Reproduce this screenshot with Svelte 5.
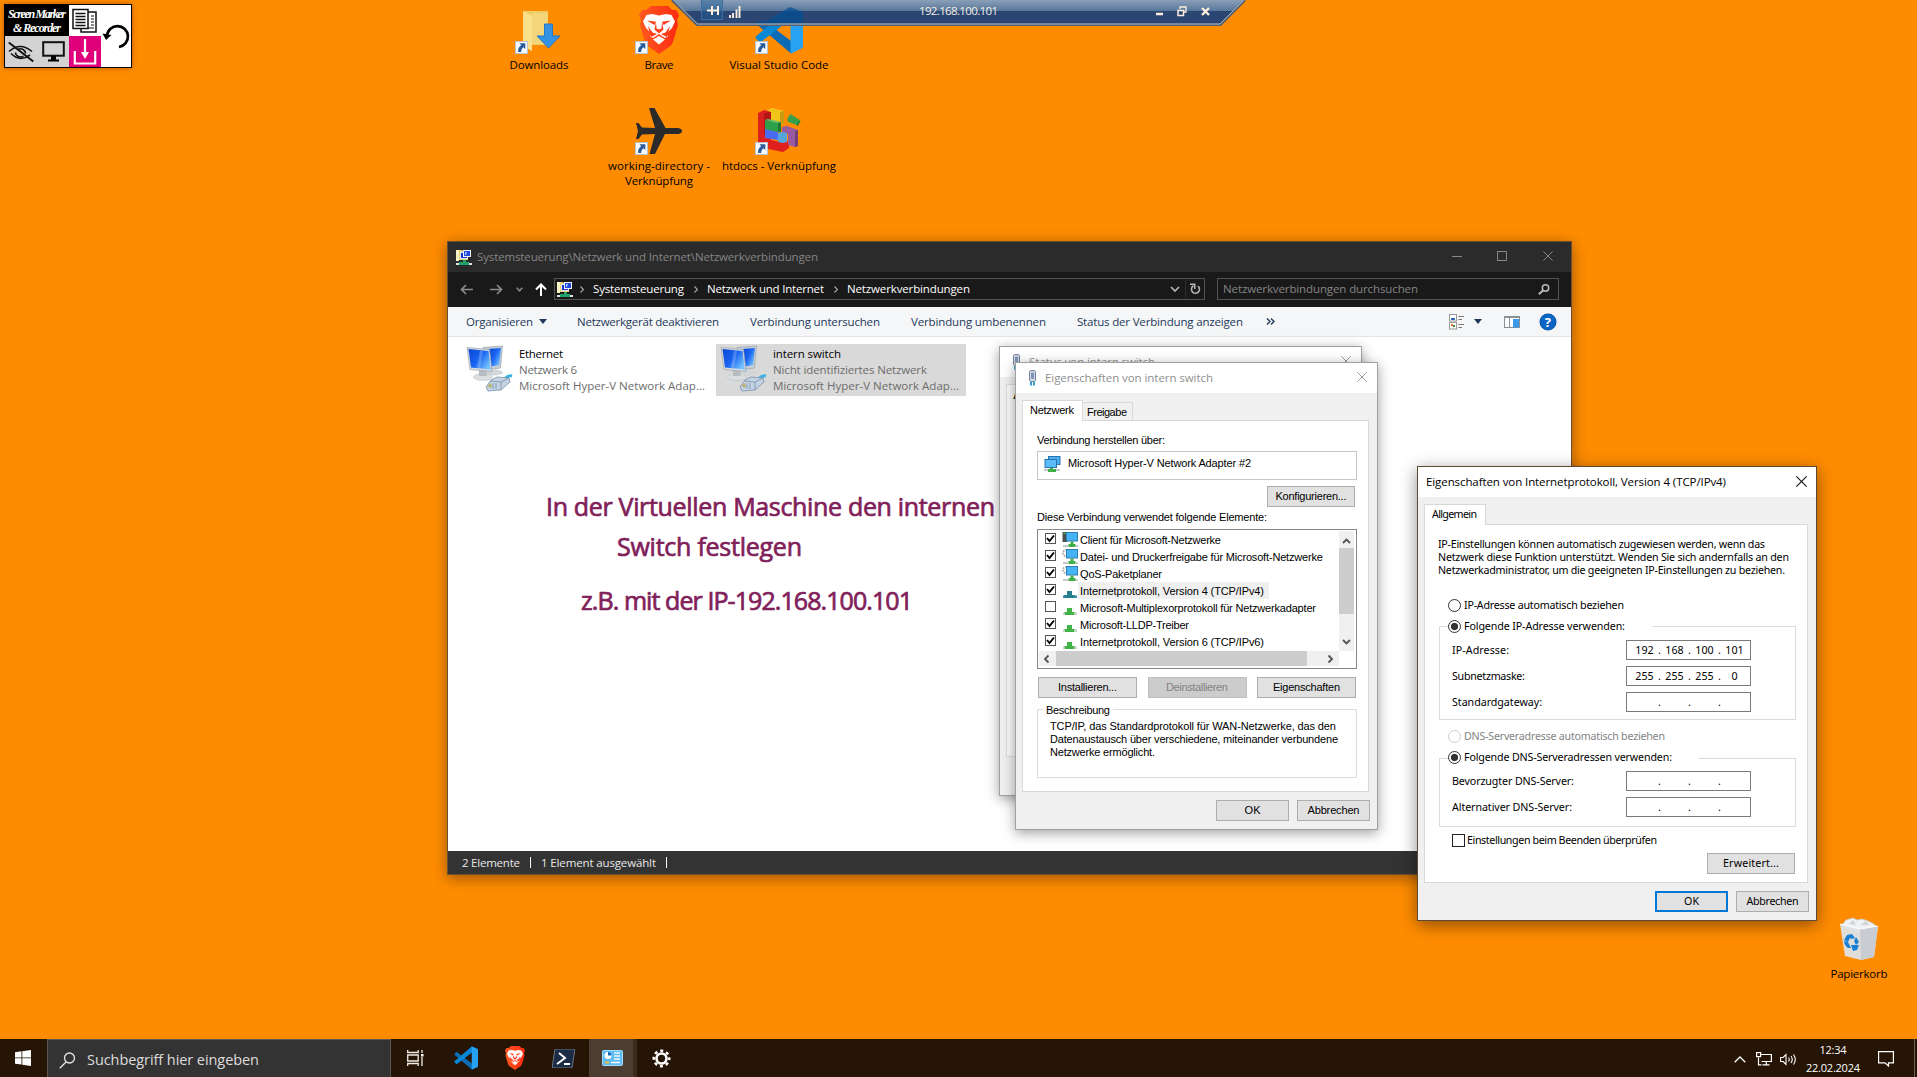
<script>
  // Spreads the letters of a label so that it fills the given width in pixels.
  function fit(node, width) {
    const natural = node.getBoundingClientRect().width;
    const gaps = Math.max(1, node.textContent.length - 1);
    const spacing = (width - natural) / gaps;
    node.style.letterSpacing = `${spacing}px`;
    node.style.marginRight = `${-spacing}px`;
  }

  const commands = [
    ['Netzwerkgerät deaktivieren', 142],
    ['Verbindung untersuchen', 130],
    ['Verbindung umbenennen', 135],
    ['Status der Verbindung anzeigen', 166]
  ];

  const crumbs = [
    ['Systemsteuerung', 91],
    ['Netzwerk und Internet', 117],
    ['Netzwerkverbindungen', 123]
  ];

  const adapters = [
    { name: ['Ethernet', 44], net: ['Netzwerk 6', 58], dev: ['Microsoft Hyper-V Network Adap...', 186], selected: false },
    { name: ['intern switch', 68], net: ['Nicht identifiziertes Netzwerk', 154], dev: ['Microsoft Hyper-V Network Adap...', 186], selected: true }
  ];

  const protocols = [
    { label: 'Client für Microsoft-Netzwerke', w: 141, on: true, icon: 'client' },
    { label: 'Datei- und Druckerfreigabe für Microsoft-Netzwerke', w: 243, on: true, icon: 'service' },
    { label: 'QoS-Paketplaner', w: 82, on: true, icon: 'service' },
    { label: 'Internetprotokoll, Version 4 (TCP/IPv4)', w: 184, on: true, icon: 'active', selected: true },
    { label: 'Microsoft-Multiplexorprotokoll für Netzwerkadapter', w: 236, on: false, icon: 'proto' },
    { label: 'Microsoft-LLDP-Treiber', w: 109, on: true, icon: 'proto' },
    { label: 'Internetprotokoll, Version 6 (TCP/IPv6)', w: 184, on: true, icon: 'proto' }
  ];

  const ipRows = [
    { label: 'IP-Adresse:', w: 57, octets: ['192', '168', '100', '101'] },
    { label: 'Subnetzmaske:', w: 73, octets: ['255', '255', '255', '0'] },
    { label: 'Standardgateway:', w: 90, octets: ['', '', '', ''] }
  ];
  const dnsRows = [
    { label: 'Bevorzugter DNS-Server:', w: 122, octets: ['', '', '', ''] },
    { label: 'Alternativer DNS-Server:', w: 120, octets: ['', '', '', ''] }
  ];
</script>

{#snippet t(text, w)}<span class="t" use:fit={w}>{text}</span>{/snippet}

{#snippet shortcut()}
  <svg class="shortcut" width="13" height="13" viewBox="0 0 13 13">
    <rect x=".5" y=".5" width="12" height="12" fill="#f7f9fb" stroke="#b9c3cf" />
    <path d="M4.500 2.200h5.800V8L8.400 6.200C6.800 7.400 6.300 8.800 6.200 11H3.200C2.600 8 4 5.800 6.200 4.200z" fill="#2a5c9c" />
  </svg>
{/snippet}

{#snippet vscode(size)}
  <svg width={size} height={size} viewBox="0 0 48 48">
    <path d="M1 15.500 4 12.600q1.200-1 2.600 0L36 35v12.500L1.500 18.200q-1.700-1.300-.5-2.700z" fill="#0b6cb5" />
    <path d="M1 32.500 4 35.400q1.200 1 2.600 0L36 13V.5L1.500 29.800q-1.700 1.300-.5 2.700z" fill="#0788d6" />
    <path d="M35.500 .3 46.500 5.500q1.500.8 1.500 2.500v32q0 1.700-1.500 2.500L35.500 47.700z" fill="#27a2f2" />
  </svg>
{/snippet}

{#snippet brave(w, h)}
  <svg width={w} height={h} viewBox="0 0 40 48">
    <defs>
      <linearGradient id="br" x1="0" x2="1"><stop offset="0" stop-color="#ff5a1f" /><stop offset="1" stop-color="#fb2a12" /></linearGradient>
    </defs>
    <path d="M12 0h17l4 4h4l3 5-2 5 1 5-5 17q-1 3-4 5l-10 7-10-7q-3-2-4-5L1 19l1-5-2-5 3-5h4z" fill="url(#br)" />
    <path d="M13 8l7 1.500L27 8l5.500 1 3.500 6.500-3 6.500-5 5 1 3.500-3 1.500-6-4-6 4-3-1.500 1-3.500-5-5-3-6.500L7.500 9z" fill="#fff" />
    <path d="M14 33.500l6-3.500 6 3.500-6 5z" fill="#fff" />
    <path d="M8 14.500l9 1.200-1.500 3.300zM32 14.500l-9 1.200 1.500 3.300zM17 16l-1.500 7.500 4.500 4 4.500-4L23 16l-.5 6.500-2.500 1-2.500-1zM9 20l4.500 6.500 4.500 1.500-6 3-1-3zM31 20l-4.500 6.500L22 28l6 3 1-3z" fill="#fc3d17" />
  </svg>
{/snippet}

{#snippet cplIcon()}
  <svg width="16" height="16" viewBox="0 0 16 16">
    <path d="M0 1h6l1 1h5v9H0z" fill="#e8d37c" /><path d="M0 1h3v11H0z" fill="#faf3c4" />
    <rect x="4.500" y="3.500" width="7" height="6" fill="#1b35c9" stroke="#dfe8f5" />
    <rect x="7.500" y="1.500" width="7" height="6" fill="#2347de" stroke="#f0f4fb" />
    <path d="M9 3h2l-1 3H9z" fill="#9fc4ff" />
    <path d="M7 11h3v2h3v3H3v-3h4z" fill="#22a06a" /><path d="M0 14h3v2H0zM13 14h3v2h-3z" fill="#dfe3e6" />
  </svg>
{/snippet}

{#snippet plug()}
  <svg width="9" height="16" viewBox="0 0 9 16">
    <path d="M2.500 .5h4l1 1v9l-1 1h-4l-1-1v-9z" fill="#cdd7ea" stroke="#75839f" />
    <path d="M3.500 3h2v5.500h-2z" fill="#8794b5" stroke="#66738f" stroke-width=".5" /><path d="M3 12v3.500M6 12v3.500" stroke="#2d9bd0" stroke-width="1.900" />
  </svg>
{/snippet}

{#snippet close(size, color)}
  <svg width={size} height={size} viewBox="0 0 10 10"><path d="M.3.3l9.400 9.400M9.700.3L.3 9.700" stroke={color} fill="none" /></svg>
{/snippet}

{#snippet lanIcon()}
  <svg width="48" height="48" viewBox="0 0 48 48">
    <defs>
      <linearGradient id="scr" x1="0" x2="1" y1="0" y2=".7"><stop offset="0" stop-color="#0a44d2" /><stop offset=".55" stop-color="#1a66f2" /><stop offset="1" stop-color="#74c2ff" /></linearGradient>
    </defs>
    <ellipse cx="28" cy="27.500" rx="9" ry="3" fill="#d3d6d9" />
    <path d="M17 2.500 36.500 1l-2 22-15 2z" fill="#c9ced4" stroke="#9aa3ad" stroke-width=".7" />
    <path d="M22 4 35 3l-1.800 17-11.200 2z" fill="url(#scr)" />
    <ellipse cx="17" cy="32" rx="9.500" ry="3.500" fill="#dcdfe1" stroke="#b5babf" stroke-width=".5" />
    <path d="M13 25h7l1 6h-8z" fill="#b8bdc2" />
    <path d="M1 2.500l22.500 2 2.500 22L4 24.500z" fill="#d8dce0" stroke="#9aa3ad" stroke-width=".7" />
    <path d="M2.500 4l20 2 2.200 18.500L5 22.500z" fill="url(#scr)" />
    <path d="M14 5.500l3 .4-3 17-3-.4z" fill="#fff" opacity=".22" />
    <path d="M38 35q4-5 8-4" stroke="#35b6e6" stroke-width="3" fill="none" />
    <path d="M25 35l6-3 12 1 1 4-9 8-13 1-2-4z" fill="#c4d3e3" stroke="#7791aa" stroke-width=".8" />
    <path d="M24 36l11 1 8-4M35 37v8M27 38v6M30 38v6" stroke="#7791aa" stroke-width=".8" fill="none" />
    <path d="M21 41l4-3 1 5z" fill="#b7b169" />
  </svg>
{/snippet}

{#snippet protoIcon(kind)}
  <svg width="16" height="17" viewBox="0 0 16 17">
    {#if kind === 'client' || kind === 'service'}
      {#if kind === 'client'}
        <path d="M.5 1h5v10h-5z" fill="#4a4d50" /><path d="M1.500 2.500h2" stroke="#49e04c" />
      {:else}
        <circle cx="4" cy="5" r="3" fill="none" stroke="#a7aeb5" stroke-width="2" stroke-dasharray="1.600 1" />
      {/if}
      <rect x="4.500" y="1.500" width="11" height="8.500" fill="#46b3f5" stroke="#2c7fb8" />
      <path d="M8.500 10.500h3V13h2v3h-7v-3h2z" fill="#3fae49" /><path d="M1 14h5v2H1zM14 14h2v2h-2z" fill="#c5c9cc" />
    {:else}
      <path d="M5 9h5v4h3v3H2v-3h3z" fill={kind === 'active' ? '#23808c' : '#3fb346'} />
      <path d="M1 13.500h2V16H1zM12 13.500h3V16h-3z" fill={kind === 'active' ? '#3b8fa8' : '#c3d3c3'} />
    {/if}
  </svg>
{/snippet}

{#snippet chevron(dir)}
  <svg class="chev {dir}" width="9" height="6" viewBox="0 0 9 6"><path d="M1 5l3.500-3.500L8 5" stroke="#555" stroke-width="1.900" fill="none" /></svg>
{/snippet}

{#snippet ipRow(row)}
  <div class="iprow">
    <span class="iplabel">{@render t(row.label, row.w)}</span>
    <div class="ipfield">
      {#each row.octets as o, i}
        <span class="octet">{o}</span>{#if i < 3}<span class="dot">.</span>{/if}
      {/each}
    </div>
  </div>
{/snippet}

<div class="desktop">
  <div class="marker">
    <div class="mk-title"><span>{@render t('Screen Marker', 58)}</span><span>{@render t('& Recorder', 48)}</span></div>
    <div class="mk-docs">
      <svg width="28" height="26" viewBox="0 0 28 26">
        <rect x="10" y="4" width="15" height="20" fill="#fff" stroke="#111" stroke-width="1.500" />
        <path d="M20 8h3M20 11h3M20 14h3M20 17h3M13 20h10" stroke="#111" stroke-width="1.200" />
        <rect x="2" y="1.500" width="15" height="19" fill="#fff" stroke="#111" stroke-width="1.500" />
        <path d="M4.500 5.500h10M4.500 8.500h10M4.500 11.500h10M4.500 14.500h10M4.500 17.500h10" stroke="#111" stroke-width="1.300" />
      </svg>
    </div>
    <div class="mk-undo">
      <svg width="28" height="30" viewBox="0 0 28 30">
        <path d="M5 14.500A10.500 10.500 0 1 1 17 26" fill="none" stroke="#000" stroke-width="2.700" /><path d="M.5 12.500 9.500 14 4 19z" />
      </svg>
    </div>
    <div class="mk-gray">
      <svg width="26" height="22" viewBox="0 0 26 22">
        <path d="M1 10.500Q12 .5 24 10.500M3 12.500q9 9 19 1.500" fill="none" stroke="#111" stroke-width="1.600" />
        <path d="M7.500 11.500a5 4.500 0 0 0 8 3.500M10 8.500a5 4.500 0 0 1 7.500 4" fill="none" stroke="#111" stroke-width="1.500" /><path d="M.8 1.500l24.500 19" stroke="#111" stroke-width="1.900" />
      </svg>
      <svg width="23" height="21" viewBox="0 0 23 21">
        <rect x="1.200" y="1.200" width="20.600" height="13.500" fill="none" stroke="#111" stroke-width="2" /><path d="M9 15h5v4H9zM6 18.500h11V20.500H6z" />
      </svg>
    </div>
    <div class="mk-save">
      <svg width="24" height="27" viewBox="0 0 24 27">
        <path d="M12 1v16M1.800 13v12.500h20.400V13" fill="none" stroke="#fff" stroke-width="2.200" /><path d="M8 14h8l-4 7z" fill="#fff" />
      </svg>
    </div>
  </div>

  <div class="dicon d1">
    <div class="pic">
      <svg width="48" height="48" viewBox="0 0 48 48">
        <path d="M8 5h25v34H8z" fill="#f0cc64" /><path d="M8 5l9 5v35l-9-5z" fill="#fbe08c" /><path d="M17 7h16v31H17z" fill="#f3d67c" />
        <path d="M29.500 18h8v12H45L33.500 42 22 30h7.500z" fill="#3493e4" stroke="#2379c6" />
      </svg>
      {@render shortcut()}
    </div>
    <span>{@render t('Downloads', 59)}</span>
  </div>
  <div class="dicon d2">
    <div class="pic">{@render brave(40, 48)}{@render shortcut()}</div>
    <span>{@render t('Brave', 29)}</span>
  </div>
  <div class="dicon d3">
    <div class="pic">{@render vscode(48)}{@render shortcut()}</div>
    <span>{@render t('Visual Studio Code', 99)}</span>
  </div>
  <div class="dicon d4">
    <div class="pic">
      <svg width="48" height="48" viewBox="0 0 48 48">
        <path d="M14 1h5.500l11 20H43q4 .5 4 3t-4 3H30L20 47h-5.500L20 27l-13 .5L3.500 32H1l2-8-2-8h2.500L7 20.500l13 .5z" fill="#2a2a2a" />
      </svg>
      {@render shortcut()}
    </div>
    <span>{@render t('working-directory -', 102)}</span><span>{@render t('Verknüpfung', 68)}</span>
  </div>
  <div class="dicon d5">
    <div class="pic">
      <svg width="48" height="48" viewBox="0 0 48 48">
        <path d="M3 6l6-3 7 2v28l14 3v5l-3 3L3 38z" fill="#dc2020" /><path d="M9 6l7-1v25l-7-3z" fill="#b51414" />
        <path d="M3 35l18 3 9-3 4-1v7l-6 4L3 40z" fill="#e01f1f" />
        <path d="M12 3l5-2 12 3v13l-4-1-9-2V5z" fill="#f0c419" /><path d="M25 5l4-1v13l-4-1z" fill="#c99b10" />
        <path d="M10 13l13 3v9l-13-2z" fill="#2fa04a" /><path d="M10 13l3-1 13 3-3 1z" fill="#55c26d" /><path d="M23 16l3-1v10l-3 0z" fill="#1c7a35" />
        <path d="M10 22l13 3v8l-13-2z" fill="#4a6cf0" />
        <path d="M27 20l5-1 11 4v16l-3 1-7-2V27l-6-2z" fill="#9a5aa0" /><path d="M40 24l3-1v16l-3 1z" fill="#73407a" />
        <path d="M23 26l4-1 5 1v9l-4 1-5-1z" fill="#56a4dc" />
        <path d="M32.500 11l3-4 10 6.500-3 5-10-4z" fill="#36a04c" /><path d="M42.500 15.500l3-2-2.500 5.500-1-.5z" fill="#1f7d35" />
      </svg>
      {@render shortcut()}
    </div>
    <span>{@render t('htdocs - Verknüpfung', 114)}</span>
  </div>
  <div class="dicon d6">
    <div class="pic">
      <svg width="48" height="48" viewBox="0 0 48 48">
        <path d="M7 10 11 5l7-2 4 2 5-1 6 2 6 3 3 3-20 6z" fill="#f0f1f2" stroke="#c4c8cc" stroke-width=".8" />
        <path d="M14 9l4-4 3 5zM25 10l6-4 3 4z" fill="#d0d3d6" />
        <path d="M5 9l20 5 18-3-4 31-13 3-16-4z" fill="#dfe2e5" opacity=".95" /><path d="M25 14l18-3-4 31-13 3z" fill="#c9cdd1" />
        <path d="M5 9l20 5 18-3" fill="none" stroke="#fff" />
        <path d="M12 20l5-1 3 4-3 1-2-1-2 4-4-2zM21 22l3 5-3 3-2-4zM9 26l4 1 3 6-3 0q-4-3-4-7zM16 30l8 0-2 5-4 1z" fill="#1a80d4" />
      </svg>
    </div>
    <span>{@render t('Papierkorb', 57)}</span>
  </div>

  <div class="rdp">
    <svg class="rdp-bg" width="576" height="27" viewBox="0 0 576 27">
      <defs>
        <linearGradient id="rg" x1="0" x2="0" y1="0" y2="1">
          <stop offset="0" stop-color="#8b9fb8" /><stop offset=".44" stop-color="#56779a" /><stop offset=".45" stop-color="#2b4672" /><stop offset="1" stop-color="#2b4672" />
        </linearGradient>
      </defs>
      <path d="M1 0h573l-24.500 25H26z" fill="url(#rg)" />
      <path d="M84 25l2-3 5-2 3 2 25-15 13 5v13z" fill="#064d94" opacity=".75" />
      <path d="M1 0l25 24.700h523.500L574 0" fill="none" stroke="#55606e" stroke-width="2.500" /><path d="M2.500 0l24 24h522.500L573 0" fill="none" stroke="#a9b8c9" />
    </svg>
    <div class="rdp-row">
      <span class="rdp-pin"><svg width="12" height="9" viewBox="0 0 12 9"><path d="M0 4.500h5M5 0v9M5 4.500h6M11 0v9" stroke="#ffeedd" stroke-width="2" fill="none" /></svg></span>
      <svg width="12" height="13" viewBox="0 0 12 13"><path d="M1 13v-3M4 13V8M7.500 13V4.500M10.500 13V1" stroke="#ffeedd" stroke-width="1.900" /></svg>
      <span class="rdp-ip">{@render t('192.168.100.101', 79)}</span>
      <svg class="rdp-min" width="8" height="9" viewBox="0 0 8 9"><path d="M0 7h7" stroke="#ffeedd" stroke-width="2.500" /></svg>
      <svg class="rdp-res" width="10" height="11" viewBox="0 0 10 11"><path d="M3 3V1h6v5H7" fill="none" stroke="#ffeedd" stroke-width="1.300" /><rect x="1" y="4.500" width="5.500" height="5" fill="none" stroke="#ffeedd" stroke-width="1.500" /></svg>
      <svg width="9" height="9" viewBox="0 0 9 9"><path d="M1 1l7 7M8 1L1 8" stroke="#ffeedd" stroke-width="2.400" /></svg>
    </div>
  </div>

  <section class="win explorer">
    <header class="ex-title">
      {@render cplIcon()}
      <span class="grow">{@render t('Systemsteuerung\\Netzwerk und Internet\\Netzwerkverbindungen', 341)}</span>
      <svg width="10" height="10" viewBox="0 0 10 10"><path d="M0 5.500h10" stroke="#888" /></svg>
      <svg width="10" height="10" viewBox="0 0 10 10"><rect x=".5" y=".5" width="9" height="9" fill="none" stroke="#888" /></svg>
      {@render close(10, '#888')}
    </header>
    <nav class="ex-nav">
      <div class="arrows">
        <svg width="13" height="11" viewBox="0 0 13 11"><path d="M13 5.500H1.500M6 1L1.500 5.500 6 10" stroke="#8b8b8b" stroke-width="1.700" fill="none" /></svg>
        <svg width="13" height="11" viewBox="0 0 13 11"><path d="M0 5.500h11.500M7 1l4.500 4.500L7 10" stroke="#8b8b8b" stroke-width="1.700" fill="none" /></svg>
        <svg width="7" height="5" viewBox="0 0 7 5"><path d="M.7.8l2.800 3 2.800-3" stroke="#888" stroke-width="1.500" fill="none" /></svg>
        <svg width="12" height="13" viewBox="0 0 12 13"><path d="M6 13V1.500M1 6.500l5-5 5 5" stroke="#fff" stroke-width="2" fill="none" /></svg>
      </div>
      <div class="address">
        {@render cplIcon()}
        {#each crumbs as [name, w]}
          <svg class="sep" width="4" height="7" viewBox="0 0 4 7"><path d="M.5.5l3 3-3 3" stroke="#aaa" stroke-width="1.100" fill="none" /></svg>
          {@render t(name, w)}
        {/each}
        <svg class="drop" width="10" height="6" viewBox="0 0 10 6"><path d="M1 1l4 4 4-4" stroke="#b4b4b4" stroke-width="1.700" fill="none" /></svg>
        <span class="refresh"><svg width="11" height="12" viewBox="0 0 11 12"><path d="M3.500 2.800A4 4 0 1 0 8 3.200" stroke="#b4b4b4" stroke-width="1.600" fill="none" /><path d="M0 1.200h4.800V6" stroke="#b4b4b4" stroke-width="1.500" fill="none" /></svg></span>
      </div>
      <div class="search">
        {@render t('Netzwerkverbindungen durchsuchen', 195)}
        <svg width="12" height="11" viewBox="0 0 12 11"><circle cx="7.500" cy="4" r="3.200" fill="none" stroke="#bbb" stroke-width="1.500" /><path d="M5 6.500L.8 10.300" stroke="#bbb" stroke-width="1.900" /></svg>
      </div>
    </nav>
    <div class="ex-tools">
      <span class="org">{@render t('Organisieren', 67)}<i class="tri"></i></span>
      {#each commands as [name, w]}<span class="cmd">{@render t(name, w)}</span>{/each}
      <span class="more"><svg width="9" height="7" viewBox="0 0 9 7"><path d="M1 .5l3 3-3 3M5 .5l3 3-3 3" stroke="#1e395b" stroke-width="1.400" fill="none" /></svg></span>
      <svg class="view" width="15" height="16" viewBox="0 0 15 16">
        <rect x=".5" y=".5" width="7" height="6.500" fill="#fff" stroke="#999" /><path d="M2 4h4v2H2z" fill="#2f69b8" /><rect x=".5" y="8.500" width="7" height="6.500" fill="#fff" stroke="#999" /><path d="M2 10h2v2H2z" fill="#e0732c" /><path d="M4 11h2v2H4z" fill="#3a8a45" />
        <path d="M9.500 2.500H15M9.500 5.500H13M9.500 10.500H15M9.500 13.500H13" stroke="#777" />
      </svg>
      <i class="tri tri2"></i>
      <svg class="pane" width="16" height="12" viewBox="0 0 16 12"><rect x=".5" y=".5" width="15" height="11" fill="#fff" stroke="#8a8f96" /><path d="M0 1.500h16M5.500 2v10" stroke="#8a8f96" /><path d="M9 3h6v8.500H9z" fill="#3c98e8" /></svg>
      <span class="help">?</span>
    </div>
    <div class="ex-body">
      {#each adapters as a}
        <div class="adapter" class:selected={a.selected}>
          {@render lanIcon()}
          <div class="ad-text">
            <span class="ad-name">{@render t(a.name[0], a.name[1])}</span>
            <span>{@render t(a.net[0], a.net[1])}</span>
            <span>{@render t(a.dev[0], a.dev[1])}</span>
          </div>
        </div>
      {/each}
    </div>
    <footer class="ex-status">{@render t('2 Elemente', 58)}<i></i>{@render t('1 Element ausgewählt', 115)}<i></i></footer>
  </section>

  <div class="note">
    <p>{@render t('In der Virtuellen Maschine den internen', 449)}</p>
    <p class="n2">{@render t('Switch festlegen', 185)}</p>
    <p class="n3">{@render t('z.B. mit der IP-192.168.100.101', 332)}</p>
  </div>

  <section class="win dlg status">
    <header class="dlg-title">{@render plug()}<span class="grow">{@render t('Status von intern switch', 126)}</span>{@render close(10, '#999')}</header>
    <div class="status-body"><div class="status-page"><b>A</b></div></div>
  </section>

  <section class="win dlg props">
    <header class="dlg-title">{@render plug()}<span class="grow">{@render t('Eigenschaften von intern switch', 168)}</span>{@render close(10, '#999')}</header>
    <div class="tabs"><span class="tab on">{@render t('Netzwerk', 44)}</span><span class="tab">{@render t('Freigabe', 40)}</span></div>
    <div class="page">
      <p class="lbl">{@render t('Verbindung herstellen über:', 128)}</p>
      <div class="nic">
        <svg width="17" height="16" viewBox="0 0 17 16">
          <rect x="4.500" y=".5" width="11.500" height="8" fill="#4bb0f2" stroke="#2a74ad" /><rect x="1" y="3.500" width="11.500" height="8" fill="#5abdf7" stroke="#2a74ad" />
          <path d="M6 12h3v1h3v3H4v-3h2z" fill="#3fae49" /><path d="M0 13h4v2H0zM12 13h4v2h-4z" fill="#c3c8cc" />
        </svg>
        <span class="nic-name">{@render t('Microsoft Hyper-V Network Adapter #2', 183)}</span>
      </div>
      <button class="btn conf">{@render t('Konfigurieren...', 71)}</button>
      <p class="lbl2">{@render t('Diese Verbindung verwendet folgende Elemente:', 230)}</p>
      <div class="list">
        <div class="rows">
          {#each protocols as p}
            <div class="row">
              <span class="chk">{#if p.on}<svg width="9" height="9" viewBox="0 0 9 9"><path d="M1 4l2.500 3L8 1.500" stroke="#000" stroke-width="1.900" fill="none" /></svg>{/if}</span>
              {@render protoIcon(p.icon)}
              <span class="rowtext" class:sel={p.selected}>{@render t(p.label, p.w)}</span>
            </div>
          {/each}
        </div>
        <div class="vbar">{@render chevron('up')}<i></i>{@render chevron('down')}</div>
        <div class="hbar">{@render chevron('left')}<i></i>{@render chevron('right')}</div>
      </div>
      <div class="three">
        <button class="btn">{@render t('Installieren...', 59)}</button>
        <button class="btn off">{@render t('Deinstallieren', 62)}</button>
        <button class="btn">{@render t('Eigenschaften', 67)}</button>
      </div>
      <div class="desc">
        <span class="legend">{@render t('Beschreibung', 64)}</span>
        <p>{@render t('TCP/IP, das Standardprotokoll für WAN-Netzwerke, das den', 286)}</p>
        <p>{@render t('Datenaustausch über verschiedene, miteinander verbundene', 288)}</p>
        <p>{@render t('Netzwerke ermöglicht.', 105)}</p>
      </div>
    </div>
    <div class="foot"><button class="btn">{@render t('OK', 16)}</button><button class="btn">{@render t('Abbrechen', 52)}</button></div>
  </section>

  <section class="win dlg ipv4">
    <header class="dlg-title"><span class="grow">{@render t('Eigenschaften von Internetprotokoll, Version 4 (TCP/IPv4)', 300)}</span>{@render close(11, '#111')}</header>
    <div class="tabs"><span class="tab on">{@render t('Allgemein', 45)}</span></div>
    <div class="page">
      <div class="intro">
        <p>{@render t('IP-Einstellungen können automatisch zugewiesen werden, wenn das', 327)}</p>
        <p>{@render t('Netzwerk diese Funktion unterstützt. Wenden Sie sich andernfalls an den', 351)}</p>
        <p>{@render t('Netzwerkadministrator, um die geeigneten IP-Einstellungen zu beziehen.', 347)}</p>
      </div>
      <div class="radio"><i></i>{@render t('IP-Adresse automatisch beziehen', 160)}</div>
      <div class="group">
        <div class="radio head h1"><i class="on"></i>{@render t('Folgende IP-Adresse verwenden:', 161)}</div>
        {#each ipRows as r}{@render ipRow(r)}{/each}
      </div>
      <div class="radio dim"><i></i>{@render t('DNS-Serveradresse automatisch beziehen', 201)}</div>
      <div class="group dns">
        <div class="radio head h2"><i class="on"></i>{@render t('Folgende DNS-Serveradressen verwenden:', 208)}</div>
        {#each dnsRows as r}{@render ipRow(r)}{/each}
      </div>
      <div class="verify"><i></i>{@render t('Einstellungen beim Beenden überprüfen', 190)}</div>
      <button class="btn adv">{@render t('Erweitert...', 56)}</button>
    </div>
    <div class="foot"><button class="btn default">{@render t('OK', 15)}</button><button class="btn">{@render t('Abbrechen', 52)}</button></div>
  </section>

  <div class="taskbar">
    <span class="start"><svg width="16" height="16" viewBox="0 0 16 16"><path d="M0 2.200l6.500-.9v6.200H0zM7.300 1.200L16 0v7.500H7.300zM0 8.300h6.500v6.300L0 13.700zM7.300 8.300H16V16l-8.700-1.200z" fill="#fff" /></svg></span>
    <div class="tsearch">
      <svg width="17" height="17" viewBox="0 0 17 17"><circle cx="10.500" cy="6" r="5" fill="none" stroke="#e6e6e6" stroke-width="1.300" /><path d="M7 10L.8 16.200" stroke="#e6e6e6" stroke-width="1.300" /></svg>
      {@render t('Suchbegriff hier eingeben', 172)}
    </div>
    <span class="app tv">
      <svg width="17" height="16" viewBox="0 0 17 16"><path d="M.7 0v2.500h10.500V0M.7 16v-2.500h10.500V16M.7 5h10.500v6H.7zM15 0v3M15 7v9" fill="none" stroke="#f0ece8" stroke-width="1.300" /><path d="M14 4h2.500v2.500H14z" fill="#fff" /></svg>
    </span>
    <span class="app">{@render vscode(24)}</span>
    <span class="app">{@render brave(20, 24)}</span>
    <span class="app">
      <svg width="23" height="19" viewBox="0 0 23 19"><path d="M3 0h20l-3 19H0z" fill="#1b2c44" stroke="#8c97a3" stroke-width=".7" /><path d="M7 4l6 5-8 6M12 15h6" fill="none" stroke="#fff" stroke-width="2" /></svg>
    </span>
    <span class="app active">
      <svg width="21" height="16" viewBox="0 0 21 16"><rect x=".5" y=".5" width="20" height="15" rx="1" fill="#5cbcf3" stroke="#a6dcfa" /><circle cx="6" cy="5.500" r="3.500" fill="#fff" /><path d="M6 5.500V2a3.500 3.500 0 0 1 3.500 3.500z" fill="#1766b5" /><path d="M12 3h6M12 6h6M12 9h6" stroke="#e9f7ff" stroke-width="1.400" /><path d="M3 12.500h4" stroke="#f6b73c" stroke-width="2" /><path d="M9 12.500h9" stroke="#fff" stroke-width="1.500" /></svg>
    </span>
    <span class="app gear">
      <svg width="19" height="19" viewBox="0 0 19 19"><circle cx="9.500" cy="9.500" r="5" fill="none" stroke="#fff" stroke-width="2.600" /><circle cx="9.500" cy="9.500" r="7.700" fill="none" stroke="#fff" stroke-width="2.600" stroke-dasharray="3 3.050" stroke-dashoffset="1.500" /></svg>
    </span>
    <div class="tray">
      <svg class="tchev" width="12" height="7" viewBox="0 0 12 7"><path d="M.7 6.300L6 1l5.300 5.300" fill="none" stroke="#fff" stroke-width="1.300" /></svg>
      <svg class="tnet" width="16" height="14" viewBox="0 0 16 14"><path d="M5 2.500h10.400v7H5.500M10.300 9.500v3M6.500 12.800h7M2.500 5.500v7.300h3" fill="none" stroke="#fff" stroke-width="1.200" /><rect x=".6" y=".6" width="4" height="4" fill="none" stroke="#fff" stroke-width="1.200" /></svg>
      <svg class="tvol" width="17" height="13" viewBox="0 0 17 13"><path d="M.6 4.500h2.500L6 1.500v10l-2.900-3H.6zM8.500 4.500q1.500 2 0 4M11 3q2.500 3.500 0 7M13.500 1.500q3.600 5 0 10" fill="none" stroke="#fff" stroke-width="1.100" /></svg>
      <div class="clock"><span>{@render t('12:34', 27)}</span><span>{@render t('22.02.2024', 54)}</span></div>
      <svg class="tmsg" width="16" height="16" viewBox="0 0 16 16"><path d="M.6.6h14.800v11.200H10.500V15L7 11.800H.6z" fill="none" stroke="#fff" stroke-width="1.200" /></svg>
      <i class="peek"></i>
    </div>
  </div>
</div>

<style>
  :global(body) { margin: 0; overflow: hidden; }
  * { box-sizing: border-box; }
  p { margin: 0; }
  svg { display: block; flex: none; }
  .t { display: inline-block; white-space: pre; }
  .grow { flex: 1; }
  .desktop { position: relative; width: 1917px; height: 1077px; overflow: hidden; background: #ff8c00; font: 11.500px/16px "Open Sans", "Noto Sans", sans-serif; color: #000; }

  .marker { position: absolute; left: 4px; top: 4px; width: 128px; height: 64px; border: 1px solid #000; background: #fff; display: grid; grid-template: 31px 31px / 64px 32px 30px; box-shadow: 0 0 5px rgba(90, 40, 0, .5); }
  .marker > div { display: flex; align-items: center; justify-content: center; }
  .marker .mk-title { flex-direction: column; background: #000; color: #fff; font: italic bold 12px/14px "Liberation Serif", serif; }
  .mk-undo { grid-area: 1 / 3 / 3 / 4; }
  .marker .mk-gray { background: #d3d3d3; gap: 8px; padding-right: 1px; }
  .mk-save { background: #e0007a; }

  .dicon { position: absolute; width: 120px; display: flex; flex-direction: column; align-items: center; line-height: 15px; }
  .pic { position: relative; width: 48px; height: 48px; display: flex; justify-content: center; margin-bottom: 3px; }
  .shortcut { position: absolute; left: 0; bottom: 0; }
  .d1 { left: 479px; top: 6px; } .d2 { left: 599px; top: 6px; } .d3 { left: 719px; top: 6px; }
  .d4 { left: 599px; top: 107px; } .d5 { left: 719px; top: 107px; } .d6 { left: 1799px; top: 915px; }

  .rdp { position: absolute; left: 671px; top: 0; width: 576px; height: 27px; color: #f5eee4; }
  .rdp-bg { position: absolute; left: 0; top: 0; }
  .rdp-row { position: relative; display: flex; align-items: center; height: 22px; padding: 0 37px 0 30px; }
  .rdp-pin { width: 22px; height: 20px; margin: -2px 6px 0 0; border: 1px solid #3b6f9f; border-top: 0; background: rgba(30, 95, 150, .45); display: flex; align-items: center; justify-content: center; padding: 2px 0 0 2px; }
  .rdp-ip { flex: 1; padding-left: 178px; }
  .rdp-min { margin-right: 13px; }
  .rdp-res { margin-right: 14px; }

  .win { position: absolute; display: flex; flex-direction: column; }
  .explorer { left: 447px; top: 241px; width: 1125px; height: 634px; border: 1px solid #6b5130; background: #fff; box-shadow: 0 3px 14px rgba(0, 0, 0, .4); }
  .ex-title { height: 30px; background: #2b2b2b; color: #858585; display: flex; align-items: center; padding: 0 18px 0 8px; }
  .ex-title .grow { padding-left: 5px; }
  .ex-title > svg + svg { margin-left: 35px; }
  .ex-title > svg:last-child { margin-left: 36px; }
  .ex-title > .grow ~ svg { margin-top: -2px; }
  .ex-nav { height: 35px; background: #191919; color: #fff; display: flex; align-items: center; padding: 0 0 1px 13px; }
  .arrows { width: 93px; display: flex; align-items: center; margin-left: -1px; margin-right: 1px; }
  .arrows svg:nth-child(2) { margin-left: 17px; } .arrows svg:nth-child(3) { margin-left: 13px; } .arrows svg:nth-child(4) { margin-left: 12px; }
  .address { width: 651px; height: 22px; border: 1px solid #535353; display: flex; align-items: center; padding-left: 2px; }
  .sep { margin: 0 9px 0 10px; }
  .address svg:first-child + .sep { margin-left: 7px; }
  .drop { margin-left: auto; margin-right: 5px; }
  .refresh { width: 19px; height: 20px; border-left: 1px solid #2c2c2c; display: flex; align-items: center; justify-content: center; }
  .search { margin-left: 12px; width: 342px; height: 22px; border: 1px solid #535353; display: flex; align-items: center; justify-content: space-between; padding: 0 8px 0 5px; color: #858585; }
  .ex-tools { height: 30px; background: #f5f6f7; border-bottom: 1px solid #e3e4e6; color: #1e395b; display: flex; align-items: center; padding-left: 18px; }
  .org { display: flex; align-items: center; width: 111px; }
  .tri { border: 4.500px solid transparent; border-top: 5px solid #1e395b; border-bottom: 0; margin-left: 6px; }
  .cmd { margin-right: 31px; }
  .more { width: 174px; margin-left: -8px; }
  .tri2 { margin-left: 10px; }
  .view { margin-left: 9px; }
  .pane { margin-left: 22px; }
  .help { margin-left: 20px; width: 16px; height: 16px; border-radius: 8px; background: #0a64c4; box-shadow: 0 0 0 .5px #044a96; color: #fff; font: bold 13px/16px "Open Sans", sans-serif; text-align: center; }
  .ex-body { flex: 1; display: flex; align-items: flex-start; padding: 7px 0 0 14px; }
  .adapter { width: 250px; height: 52px; display: flex; padding: 1px 0 0 4px; margin-right: 4px; }
  .adapter.selected { background: #d9d9d9; }
  .ad-text { display: flex; flex-direction: column; color: #6d6d6d; padding: 1px 0 0 5px; }
  .ad-name { color: #000; }
  .ex-status { height: 23px; background: #333; color: #e8e8e8; display: flex; align-items: center; padding-left: 14px; }
  .ex-status i { width: 1px; height: 11px; background: #fff; margin: 0 10px; }

  .note { position: absolute; left: 546px; top: 486px; color: #81215a; font: 400 25px/40px "Open Sans", "Noto Sans", sans-serif; -webkit-text-stroke: .7px #81215a; }
  .n2 { padding-left: 71px; }
  .n3 { padding-left: 35px; margin-top: 14px; }

  .dlg { background: #f0f0f0; border: 1px solid #a0a0a0; box-shadow: 0 3px 12px rgba(0, 0, 0, .38); }
  .dlg-title { height: 30px; flex: none; background: #fff; color: #8f8f8f; display: flex; align-items: center; padding: 0 10px 0 12px; }
  .dlg-title .grow { padding-left: 8px; }
  .dlg-title > svg:last-child { margin-top: -2px; }
  .status { left: 999px; top: 346px; width: 363px; height: 450px; }
  .status-body { flex: 1; padding: 7px 6px 38px; display: flex; }
  .status-page { flex: 1; background: #fafafa; border: 1px solid #dcdcdc; padding: 2px 6px; color: #222; font: bold 11px/16px "Liberation Sans", sans-serif; }
  .props { left: 1015px; top: 362px; width: 363px; height: 468px; }
  .props > :not(header) { font: 11px/14px "Liberation Sans", sans-serif; }
  .tabs { display: flex; align-items: flex-end; height: 27px; padding-left: 6px; }
  .tab { height: 18px; line-height: 18px; padding: 0 5px 0 4px; border: 1px solid #d9d9d9; border-bottom: 0; border-left: 0; }
  .tab.on { position: relative; z-index: 1; height: 21px; line-height: 19px; margin-bottom: -1px; background: #fff; border-left: 1px solid #d9d9d9; padding: 0 8px 0 7px; }
  .page { background: #fff; border: 1px solid #d9d9d9; display: flex; flex-direction: column; }
  .props .page { margin: 0 8px 0 6px; height: 372px; padding: 12px 11px 0 14px; }
  .lbl { height: 18px; }
  .nic { height: 29px; border: 1px solid #c6c6c6; display: flex; padding: 4px 6px; }
  .nic-name { margin-left: 7px; }
  .btn { height: 21px; padding: 0; border: 1px solid #adadad; background: #e1e1e1; font: inherit; line-height: 19px; color: #000; text-align: center; }
  .conf { width: 88px; align-self: flex-end; margin: 6px 2px 0 0; }
  .lbl2 { height: 22px; padding-top: 3px; }
  .list { height: 140px; border: 1px solid #828790; display: grid; grid-template: 121px 15px / 300px 15px; padding: 0 1px; }
  .rows { overflow: hidden; padding-top: 1px; }
  .row { height: 17px; display: flex; align-items: flex-start; padding-left: 6px; }
  .chk { width: 11px; height: 11px; margin: 2px 6px 0 0; border: 1px solid #555; display: flex; align-items: center; justify-content: center; background: #fff; }
  .rowtext { height: 17px; line-height: 19px; padding: 0 5px 0 2px; }
  .rowtext.sel { background: #f0f0f0; }
  .vbar { background: #f0f0f0; display: flex; flex-direction: column; align-items: center; padding: 7px 0 6px; margin-top: 1px; }
  .vbar i { width: 15px; height: 66px; background: #cdcdcd; margin: 4px 0 auto; }
  .hbar { background: #f0f0f0; display: flex; align-items: center; padding: 0 4px 0 3px; }
  .hbar i { width: 251px; height: 15px; background: #cdcdcd; margin-left: 5px; margin-right: auto; }
  .chev.down { transform: rotate(180deg); } .chev.left { transform: rotate(-90deg); } .chev.right { transform: rotate(90deg); }
  .three { display: flex; justify-content: space-between; padding: 8px 1px 0; }
  .three .btn { width: 99px; }
  .off { background: #ccc; border-color: #bfbfbf; color: #838383; }
  .desc { position: relative; margin-top: 11px; height: 69px; border: 1px solid #dcdcdc; padding: 10px 12px; line-height: 13px; }
  .desc p { line-height: 13px; }
  .legend { position: absolute; left: 5px; top: -6px; padding: 0 3px; background: #fff; }
  .foot { display: flex; justify-content: flex-end; gap: 8px; padding: 8px 7px 0 0; }
  .foot .btn { width: 73px; }

  .ipv4 { left: 1417px; top: 466px; width: 400px; height: 455px; border-color: #5c4a33; box-shadow: 0 4px 16px rgba(0, 0, 0, .45); }
  .ipv4 > :not(header) { font: 10.700px/13px "Noto Sans", "Open Sans", sans-serif; }
  .ipv4 .dlg-title { color: #000; padding: 0 9px 0 0; }
  .ipv4 .grow { padding-left: 8px; }
  .ipv4 .page { margin: 0 8px 0 6px; height: 359px; padding: 13px 11px 0 14px; }
  .intro { height: 60px; margin-left: -1px; }
  .radio { display: flex; align-items: center; height: 14px; padding-left: 9px; gap: 3px; }
  .radio i { width: 13px; height: 13px; border: 1px solid #333; border-radius: 50%; background: #fff; }
  .radio i.on { background: radial-gradient(circle, #333 0 3.300px, #fff 4px); }
  .radio.dim { color: #838383; } .radio.dim i { border-color: #ccc; }
  .group { height: 94px; margin-top: 14px; border: 1px solid #dcdcdc; padding-left: 12px; }
  .dns { height: 69px; margin-top: 15px; }
  .head { background: #fff; padding: 0; margin: -8px 0 7px -4px; width: 204px; }
  .h2 { width: 251px; margin-top: -9px; }
  .iprow { display: flex; align-items: center; height: 20px; margin-bottom: 6px; }
  .iplabel { width: 174px; }
  .ipfield { width: 125px; height: 20px; border: 1px solid #7a7a7a; background: #fff; display: flex; align-items: center; padding-left: 5px; line-height: 18px; }
  .octet { width: 25px; text-align: center; }
  .dot { width: 5px; text-align: center; }
  .group + .radio.dim { margin-top: 9px; }
  .verify { display: flex; align-items: center; gap: 2px; height: 13px; margin: 7px 0 0 13px; }
  .verify i { width: 13px; height: 13px; border: 1px solid #222; }
  .adv { width: 88px; align-self: flex-end; margin: 6px 1px 0 0; }
  .default { border: 2px solid #0078d7; line-height: 17px; }

  .taskbar { position: absolute; left: 0; right: 0; bottom: 0; height: 38px; background: #261404; color: #fff; display: flex; align-items: center; }
  .start { width: 47px; padding-left: 15px; }
  .tsearch { width: 344px; height: 38px; background: #333; border: 1px solid #5c5753; border-bottom: 0; display: flex; align-items: center; gap: 11px; padding: 3px 0 0 11px; font-size: 14.500px; line-height: 20px; color: #dcdcdc; }
  .app { width: 49px; height: 38px; display: flex; align-items: center; justify-content: center; }
  .tv { margin: 0 1px 0 0; }
  .app.active { width: 44px; background: #4b3d31; margin-left: 1px; padding-left: 2px; }
  .gear { width: 56px; border-left: 4px solid #3a2b1d; margin-right: auto; padding-right: 4px; }
  .tray { display: flex; align-items: center; height: 38px; padding-top: 2px; }
  .tnet { margin-left: 10px; } .tvol { margin-left: 8px; }
  .clock { width: 64px; margin: -1px 13px 0 4px; display: flex; flex-direction: column; align-items: center; line-height: 18px; font-size: 11px; }
  .peek { width: 1px; height: 38px; margin: -2px 2px 0 20px; background: #6e6258; }
</style>
